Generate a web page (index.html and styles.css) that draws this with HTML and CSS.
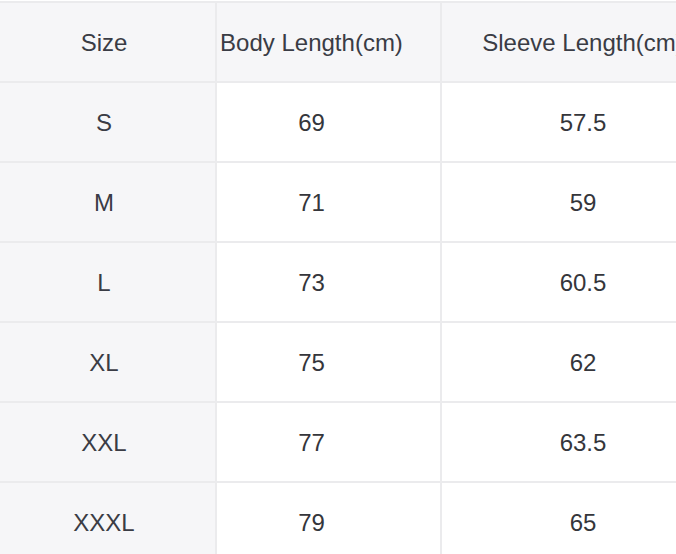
FILE: index.html
```html
<!DOCTYPE html>
<html lang="en">
<head>
<meta charset="utf-8">
<title>Size chart</title>
<link rel="stylesheet" href="styles.css">
</head>
<body>
<div class="wrap">
<table class="chart">
  <thead>
    <tr><th class="c1">Size</th><th class="c2">Body Length(cm)</th><th class="c3">Sleeve Length(cm)</th></tr>
  </thead>
  <tbody>
    <tr><th class="c1">S</th><td class="c2">69</td><td class="c3">57.5</td></tr>
    <tr><th class="c1">M</th><td class="c2">71</td><td class="c3">59</td></tr>
    <tr><th class="c1">L</th><td class="c2">73</td><td class="c3">60.5</td></tr>
    <tr><th class="c1">XL</th><td class="c2">75</td><td class="c3">62</td></tr>
    <tr><th class="c1">XXL</th><td class="c2">77</td><td class="c3">63.5</td></tr>
    <tr><th class="c1">XXXL</th><td class="c2">79</td><td class="c3">65</td></tr>
  </tbody>
</table>
</div>
</body>
</html>
```
FILE: styles.css
```css
html, body {
  margin: 0;
  padding: 0;
  background: #ffffff;
}
.wrap {
  width: 676px;
  height: 554px;
  overflow: hidden;
  padding-top: 1px;
  box-sizing: border-box;
}
.chart {
  width: 726px;
  border-collapse: separate;
  border-spacing: 0;
  border-top: 2px solid #ebebed;
  table-layout: fixed;
  font-family: "Liberation Sans", Arial, sans-serif;
  font-size: 24px;
  color: #35363b;
}
.chart th, .chart td {
  box-sizing: border-box;
  height: 80px;
  padding: 2px 0 0 0;
  text-align: center;
  vertical-align: middle;
  font-weight: normal;
  border-right: 2px solid #ebebed;
  border-bottom: 2px solid #ebebed;
  white-space: nowrap;
  overflow: hidden;
}
.chart thead th {
  background: #f6f6f8;
  color: #3a3c45;
}
.chart tbody th {
  background: #f6f6f8;
  color: #3a3c45;
}
.c1 {
  width: 217px;
  padding-right: 7px !important;
}
.c2 {
  width: 225px;
  padding-right: 34px !important;
}
.c3 {
  width: 284px;
}
```
